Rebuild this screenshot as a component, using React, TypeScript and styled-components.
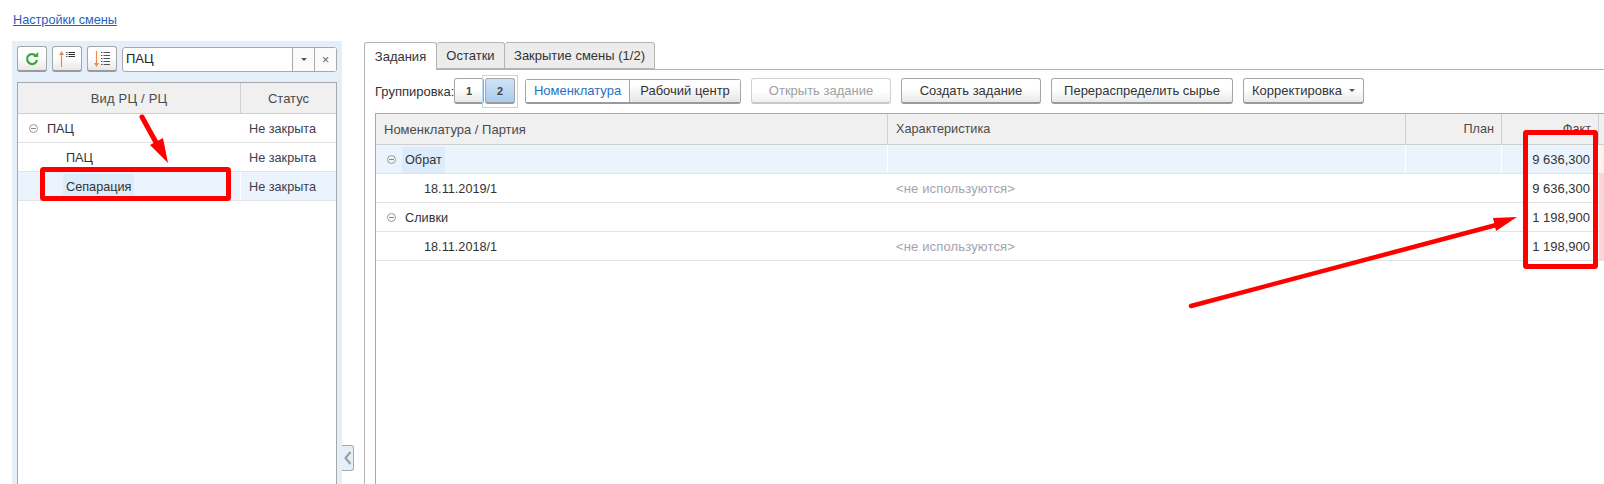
import React from "react";
import styled, { createGlobalStyle } from "styled-components";

const Global = createGlobalStyle`
  html, body { margin: 0; padding: 0; background: #fff; }
  body { font-family: "Liberation Sans", Arial, sans-serif; font-size: 13px; color: #333; }
`;

const Page = styled.div`
  position: relative;
  width: 1604px;
  height: 484px;
  overflow: hidden;
  background: #fff;
`;
const TopBar = styled.div`
  height: 41px;
  padding: 13px 0 0 13px;
  box-sizing: border-box;
`;
const TopLink = styled.a`
  font-size: 12.7px;
  line-height: 15px;
  color: #1f5fbf;
  text-decoration: underline;
  display: block;
`;
const Body = styled.div`
  display: flex;
  height: 443px;
`;
const SideSpacer = styled.div`
  width: 12px;
  flex: none;
`;
const LeftPanel = styled.div`
  width: 330px;
  flex: none;
  box-sizing: border-box;
  background: #e4effa;
  padding: 5px 5px 0;
  display: flex;
  flex-direction: column;
`;
const LeftTools = styled.div`
  display: flex;
  align-items: flex-start;
  height: 36px;
  gap: 5px;
`;
const Btn = styled.div<{ $w?: number; $h?: number; $active?: boolean; $disabled?: boolean }>`
  box-sizing: border-box;
  width: ${(p) => (p.$w ? `${p.$w}px` : "auto")};
  height: ${(p) => p.$h ?? 26}px;
  flex: none;
  display: flex;
  align-items: center;
  justify-content: center;
  font-size: 13px;
  border: 1px solid ${(p) => (p.$disabled ? "#d0d0d0" : "#a6a6a6")};
  border-bottom: 2px solid ${(p) => (p.$disabled ? "#c8c8c8" : "#9a9a9a")};
  border-radius: 3px;
  color: ${(p) => (p.$disabled ? "#a0a0a0" : "#333")};
  background: ${(p) =>
    p.$active
      ? "linear-gradient(#cfe3f6, #a9cdee)"
      : p.$disabled
      ? "linear-gradient(#ffffff 55%, #f0f0f0)"
      : "linear-gradient(#ffffff 45%, #e8e8e8)"};
`;
const SearchField = styled.div`
  box-sizing: border-box;
  width: 215px;
  height: 25px;
  margin-top: 1px;
  display: flex;
  background: #fff;
  border: 1px solid #a9a9a9;
  border-radius: 3px;
`;
const SearchText = styled.div`
  flex: 1;
  padding-left: 3px;
  font-size: 13px;
  line-height: 22px;
  color: #222;
`;
const SearchBtn = styled.div`
  width: 21px;
  border-left: 1px solid #a9a9a9;
  display: flex;
  align-items: center;
  justify-content: center;
  color: #666;
  background: #fbfbfb;
`;
const Caret = styled.span`
  width: 0;
  height: 0;
  border-left: 3px solid transparent;
  border-right: 3px solid transparent;
  border-top: 3px solid #555;
`;
const CaretLeft = styled(Caret)`
  margin-left: 7px;
`;

const TreeBox = styled.div`
  flex: 1;
  width: 320px;
  box-sizing: border-box;
  border: 1px solid #a8a8a8;
  border-bottom: 0;
  background: #fff;
`;
const LeftHead = styled.div`
  display: grid;
  grid-template-columns: 223px 1fr;
  height: 30px;
  background: #f0f0f0;
  border-bottom: 1px solid #cfcfcf;
  font-size: 13px;
  color: #4a4a4a;
`;
const HeadCenter = styled.div<{ $line?: boolean }>`
  display: flex;
  align-items: center;
  justify-content: center;
  letter-spacing: ${(p) => (p.$line ? "0.2px" : "0")};
  border-right: ${(p) => (p.$line ? "1px solid #cfcfcf" : "0")};
`;
const LeftRow = styled.div<{ $sel?: boolean }>`
  display: grid;
  grid-template-columns: 223px 1fr;
  height: 29px;
  box-sizing: border-box;
  border-bottom: 1px solid #e3e3e3;
  background: ${(p) => (p.$sel ? "#ebf4fc" : "#fff")};
  align-items: center;
  font-size: 12.7px;
  color: #333;
`;
const TreeCell = styled.div<{ $indent: number; $sel?: boolean }>`
  display: flex;
  align-items: center;
  height: 100%;
  box-sizing: border-box;
  padding: 1px 0 0 ${(p) => p.$indent}px;
  border-right: 1px solid ${(p) => (p.$sel ? "#fff" : "transparent")};
`;
const StatusCell = styled.div`
  padding: 1px 0 0 8px;
  color: #3d3d4d;
`;
const Selected = styled.span`
  background: #dcecfa;
  height: 26px;
  display: flex;
  align-items: center;
  padding: 0 3px;
  margin-left: -3px;
`;
const Toggle = styled.span`
  width: 9px;
  height: 9px;
  box-sizing: border-box;
  border: 1px solid #999;
  border-radius: 50%;
  position: relative;
  display: inline-block;
  flex: none;
  margin-right: 9px;
  &::after {
    content: "";
    position: absolute;
    left: 1px;
    right: 1px;
    top: 3px;
    height: 1px;
    background: #888;
  }
`;

const Collapse = styled.div`
  width: 12px;
  height: 26px;
  margin-top: 404px;
  flex: none;
  box-sizing: border-box;
  border: 1px solid #a8a8a8;
  border-left: 0;
  border-radius: 0 3px 3px 0;
  background: #e4effa;
  display: flex;
  align-items: center;
  justify-content: center;
`;
const Gutter = styled.div`
  width: 10px;
  flex: none;
`;
const RightPanel = styled.div`
  flex: 1;
  min-width: 0;
  display: flex;
  flex-direction: column;
`;
const Tabs = styled.div`
  display: flex;
  height: 27px;
  margin-top: 1px;
`;
const Tab = styled.div<{ $active?: boolean; $w: number }>`
  box-sizing: border-box;
  width: ${(p) => p.$w}px;
  height: ${(p) => (p.$active ? 28 : 27)}px;
  display: flex;
  align-items: center;
  justify-content: center;
  font-size: 13px;
  color: #333;
  background: ${(p) => (p.$active ? "#fff" : "#ececec")};
  border: 1px solid #b4b4b4;
  border-bottom: ${(p) => (p.$active ? "0" : "1px solid #b4b4b4")};
  border-left: ${(p) => (p.$active ? "1px solid #b4b4b4" : "0")};
  border-radius: 3px 3px 0 0;
  position: relative;
  z-index: ${(p) => (p.$active ? 1 : 0)};
`;
const TabPanel = styled.div`
  flex: 1;
  border-left: 1px solid #b4b4b4;
  border-top: 1px solid #b4b4b4;
  padding: 8px 0 0 10px;
  display: flex;
  flex-direction: column;
`;
const Toolbar = styled.div`
  display: flex;
  align-items: center;
  height: 26px;
`;
const GroupLabel = styled.span`
  font-size: 13px;
  width: 79px;
  flex: none;
  color: #333;
  white-space: nowrap;
`;
const Focus = styled.div`
  box-sizing: border-box;
  position: relative;
  margin-left: 1px;
  &::after {
    content: "";
    position: absolute;
    left: -3px;
    right: -3px;
    top: -3px;
    bottom: -4px;
    border: 1px solid #b5d8f3;
  }
`;
const Bold = styled.b`
  font-size: 11px;
  color: #444;
`;
const Segment = styled.div`
  display: flex;
  margin-left: 10px;
  height: 25px;
  border: 1px solid #a6a6a6;
  border-bottom: 2px solid #9a9a9a;
  border-radius: 3px;
  box-sizing: border-box;
`;
const Seg = styled.div<{ $on?: boolean; $w: number }>`
  width: ${(p) => p.$w}px;
  display: flex;
  align-items: center;
  justify-content: center;
  font-size: 13px;
  color: ${(p) => (p.$on ? "#2a6fc4" : "#333")};
  background: ${(p) => (p.$on ? "#fff" : "linear-gradient(#fff 20%, #e6e6e6)")};
  border-left: ${(p) => (p.$on ? "0" : "1px solid #a6a6a6")};
`;
const ActionBtn = styled(Btn)`
  margin-left: 10px;
`;
const GridBox = styled.div`
  margin-top: 9px;
  flex: 1;
  border-left: 1px solid #a8a8a8;
  border-top: 1px solid #a8a8a8;
`;
const cols = "512px 518px 96px 97px 1fr";
const GridHead = styled.div`
  display: grid;
  grid-template-columns: ${cols};
  height: 30px;
  background: #f0f0f0;
  border-bottom: 1px solid #cfcfcf;
  font-size: 13px;
  color: #4a4a4a;
`;
const HeadCell = styled.div<{ $right?: boolean; $narrow?: boolean }>`
  display: flex;
  align-items: center;
  justify-content: ${(p) => (p.$right ? "flex-end" : "flex-start")};
  padding: 0 7px 0 8px;
  border-right: 1px solid #cfcfcf;
  white-space: nowrap;
  font-size: ${(p) => (p.$narrow ? "12.7px" : "13px")};
`;
const GridRow = styled.div<{ $sel?: boolean }>`
  display: grid;
  grid-template-columns: ${cols};
  height: 29px;
  box-sizing: border-box;
  border-bottom: 1px solid #e3e3e3;
  background: ${(p) => (p.$sel ? "#ebf4fc" : "#fff")};
  color: #333;
`;
const Cell = styled.div<{ $right?: boolean; $muted?: boolean; $pad?: number; $pink?: number; $sel?: boolean }>`
  display: flex;
  align-items: center;
  box-sizing: border-box;
  min-width: 0;
  white-space: nowrap;
  justify-content: ${(p) => (p.$right ? "flex-end" : "flex-start")};
  padding: ${(p) => (p.$right || p.$muted ? 0 : 1)}px ${(p) => (p.$right ? 8 : 0)}px 0 ${(p) => p.$pad ?? 8}px;
  font-size: ${(p) => (p.$right || p.$muted ? "13px" : "12.7px")};
  letter-spacing: ${(p) => (p.$muted ? "0.15px" : "0")};
  color: ${(p) => (p.$muted ? "#a3a3ad" : "#333")};
  background: ${(p) => (p.$pink === 2 ? "#fbd5d3" : p.$pink === 1 ? "#fdf0ef" : "transparent")};
  border-right: 1px solid ${(p) => (p.$sel ? "#fff" : "transparent")};
`;
const Marks = styled.svg`
  position: absolute;
  left: 0;
  top: 0;
  pointer-events: none;
`;

function Refresh() {
  return (
    <svg width="14" height="14" viewBox="0 0 14 14" fill="none">
      <path d="M11.2 4.2A5 5 0 1 0 12 8" stroke="#3aa63c" strokeWidth="2.2" />
      <path d="M8.2 4.9h5V0z" fill="#3aa63c" />
    </svg>
  );
}
function SortAsc() {
  return (
    <svg width="22" height="18" viewBox="0 0 22 18" fill="none">
      <path d="M5.5 3v14" stroke="#f08a4b" strokeWidth="1.2" />
      <path d="M5.5 1 3 5h5z" fill="#f08a4b" />
      <path d="M10 2.5h1.5M10 4.5h1.5M10 6.5h1.5" stroke="#555" />
      <path d="M12.5 2.5H19M12.5 4.5H19M12.5 6.5H19" stroke="#333" />
    </svg>
  );
}
function SortDesc() {
  return (
    <svg width="22" height="18" viewBox="0 0 22 18" fill="none">
      <path d="M5.5 1v14" stroke="#f08a4b" strokeWidth="1.2" />
      <path d="M5.5 17 3 13h5z" fill="#f08a4b" />
      <path d="M10 2.5h1.5M10 5.5h1.5M10 8.5h1.5M10 11.5h1.5M10 14.5h1.5" stroke="#555" />
      <path d="M12.5 2.5H19M12.5 5.5H19M12.5 8.5H19M12.5 11.5H19M12.5 14.5H19" stroke="#555" />
    </svg>
  );
}

export default function App() {
  return (
    <Page>
      <Global />
      <TopBar>
        <TopLink>Настройки смены</TopLink>
      </TopBar>
      <Body>
        <SideSpacer />
        <LeftPanel>
          <LeftTools>
            <Btn $w={30}><Refresh /></Btn>
            <Btn $w={30}><SortAsc /></Btn>
            <Btn $w={30}><SortDesc /></Btn>
            <SearchField>
              <SearchText>ПАЦ</SearchText>
              <SearchBtn><Caret /></SearchBtn>
              <SearchBtn>×</SearchBtn>
            </SearchField>
          </LeftTools>
          <TreeBox>
            <LeftHead>
              <HeadCenter $line>Вид РЦ / РЦ</HeadCenter>
              <HeadCenter>Статус</HeadCenter>
            </LeftHead>
            <LeftRow>
              <TreeCell $indent={11}><Toggle />ПАЦ</TreeCell>
              <StatusCell>Не закрыта</StatusCell>
            </LeftRow>
            <LeftRow>
              <TreeCell $indent={48}>ПАЦ</TreeCell>
              <StatusCell>Не закрыта</StatusCell>
            </LeftRow>
            <LeftRow $sel>
              <TreeCell $indent={48} $sel><Selected>Сепарация</Selected></TreeCell>
              <StatusCell>Не закрыта</StatusCell>
            </LeftRow>
          </TreeBox>
        </LeftPanel>
        <Collapse>
          <svg width="8" height="16" viewBox="0 0 8 16" fill="none">
            <path d="M6.5 2 1.5 8l5 6" stroke="#9a9a9a" strokeWidth="2" />
          </svg>
        </Collapse>
        <Gutter />
        <RightPanel>
          <Tabs>
            <Tab $active $w={73}>Задания</Tab>
            <Tab $w={68}>Остатки</Tab>
            <Tab $w={150}>Закрытие смены (1/2)</Tab>
          </Tabs>
          <TabPanel>
            <Toolbar>
              <GroupLabel>Группировка:</GroupLabel>
              <Btn $w={30}><Bold>1</Bold></Btn>
              <Focus><Btn $w={30} $active><Bold>2</Bold></Btn></Focus>
              <Segment>
                <Seg $on $w={103}>Номенклатура</Seg>
                <Seg $w={110}>Рабочий центр</Seg>
              </Segment>
              <ActionBtn $w={140} $disabled>Открыть задание</ActionBtn>
              <ActionBtn $w={140}>Создать задание</ActionBtn>
              <ActionBtn $w={182}>Перераспределить сырье</ActionBtn>
              <ActionBtn $w={121}>Корректировка<CaretLeft /></ActionBtn>
            </Toolbar>
            <GridBox>
              <GridHead>
                <HeadCell>Номенклатура / Партия</HeadCell>
                <HeadCell $narrow>Характеристика</HeadCell>
                <HeadCell $right $narrow>План</HeadCell>
                <HeadCell $right $narrow>Факт</HeadCell>
                <div />
              </GridHead>
              <GridRow $sel>
                <Cell $pad={11} $sel><Toggle /><Selected>Обрат</Selected></Cell>
                <Cell $sel />
                <Cell $sel />
                <Cell $right $sel>9 636,300</Cell>
                <Cell $pink={1} />
              </GridRow>
              <GridRow>
                <Cell $pad={48}>18.11.2019/1</Cell>
                <Cell $muted>&lt;не используются&gt;</Cell>
                <Cell />
                <Cell $right>9 636,300</Cell>
                <Cell $pink={2} />
              </GridRow>
              <GridRow>
                <Cell $pad={11}><Toggle />Сливки</Cell>
                <Cell />
                <Cell />
                <Cell $right>1 198,900</Cell>
                <Cell $pink={2} />
              </GridRow>
              <GridRow>
                <Cell $pad={48}>18.11.2018/1</Cell>
                <Cell $muted>&lt;не используются&gt;</Cell>
                <Cell />
                <Cell $right>1 198,900</Cell>
                <Cell $pink={2} />
              </GridRow>
            </GridBox>
          </TabPanel>
        </RightPanel>
      </Body>
      <Marks width="1604" height="484" viewBox="0 0 1604 484" fill="none">
        <rect x="42.5" y="169.5" width="186" height="29" stroke="#fe0000" strokeWidth="5" rx="1" />
        <rect x="1525.5" y="132.5" width="70" height="134" stroke="#fe0000" strokeWidth="5" rx="1" />
        <path d="M142 117 158 146" stroke="#fe0000" strokeWidth="5" strokeLinecap="round" />
        <path d="M168 163 150 145 163 138z" fill="#fe0000" />
        <path d="M1191 306 1500 224" stroke="#fe0000" strokeWidth="4.5" strokeLinecap="round" />
        <path d="M1517 217 1496 231 1493 218z" fill="#fe0000" />
      </Marks>
    </Page>
  );
}
